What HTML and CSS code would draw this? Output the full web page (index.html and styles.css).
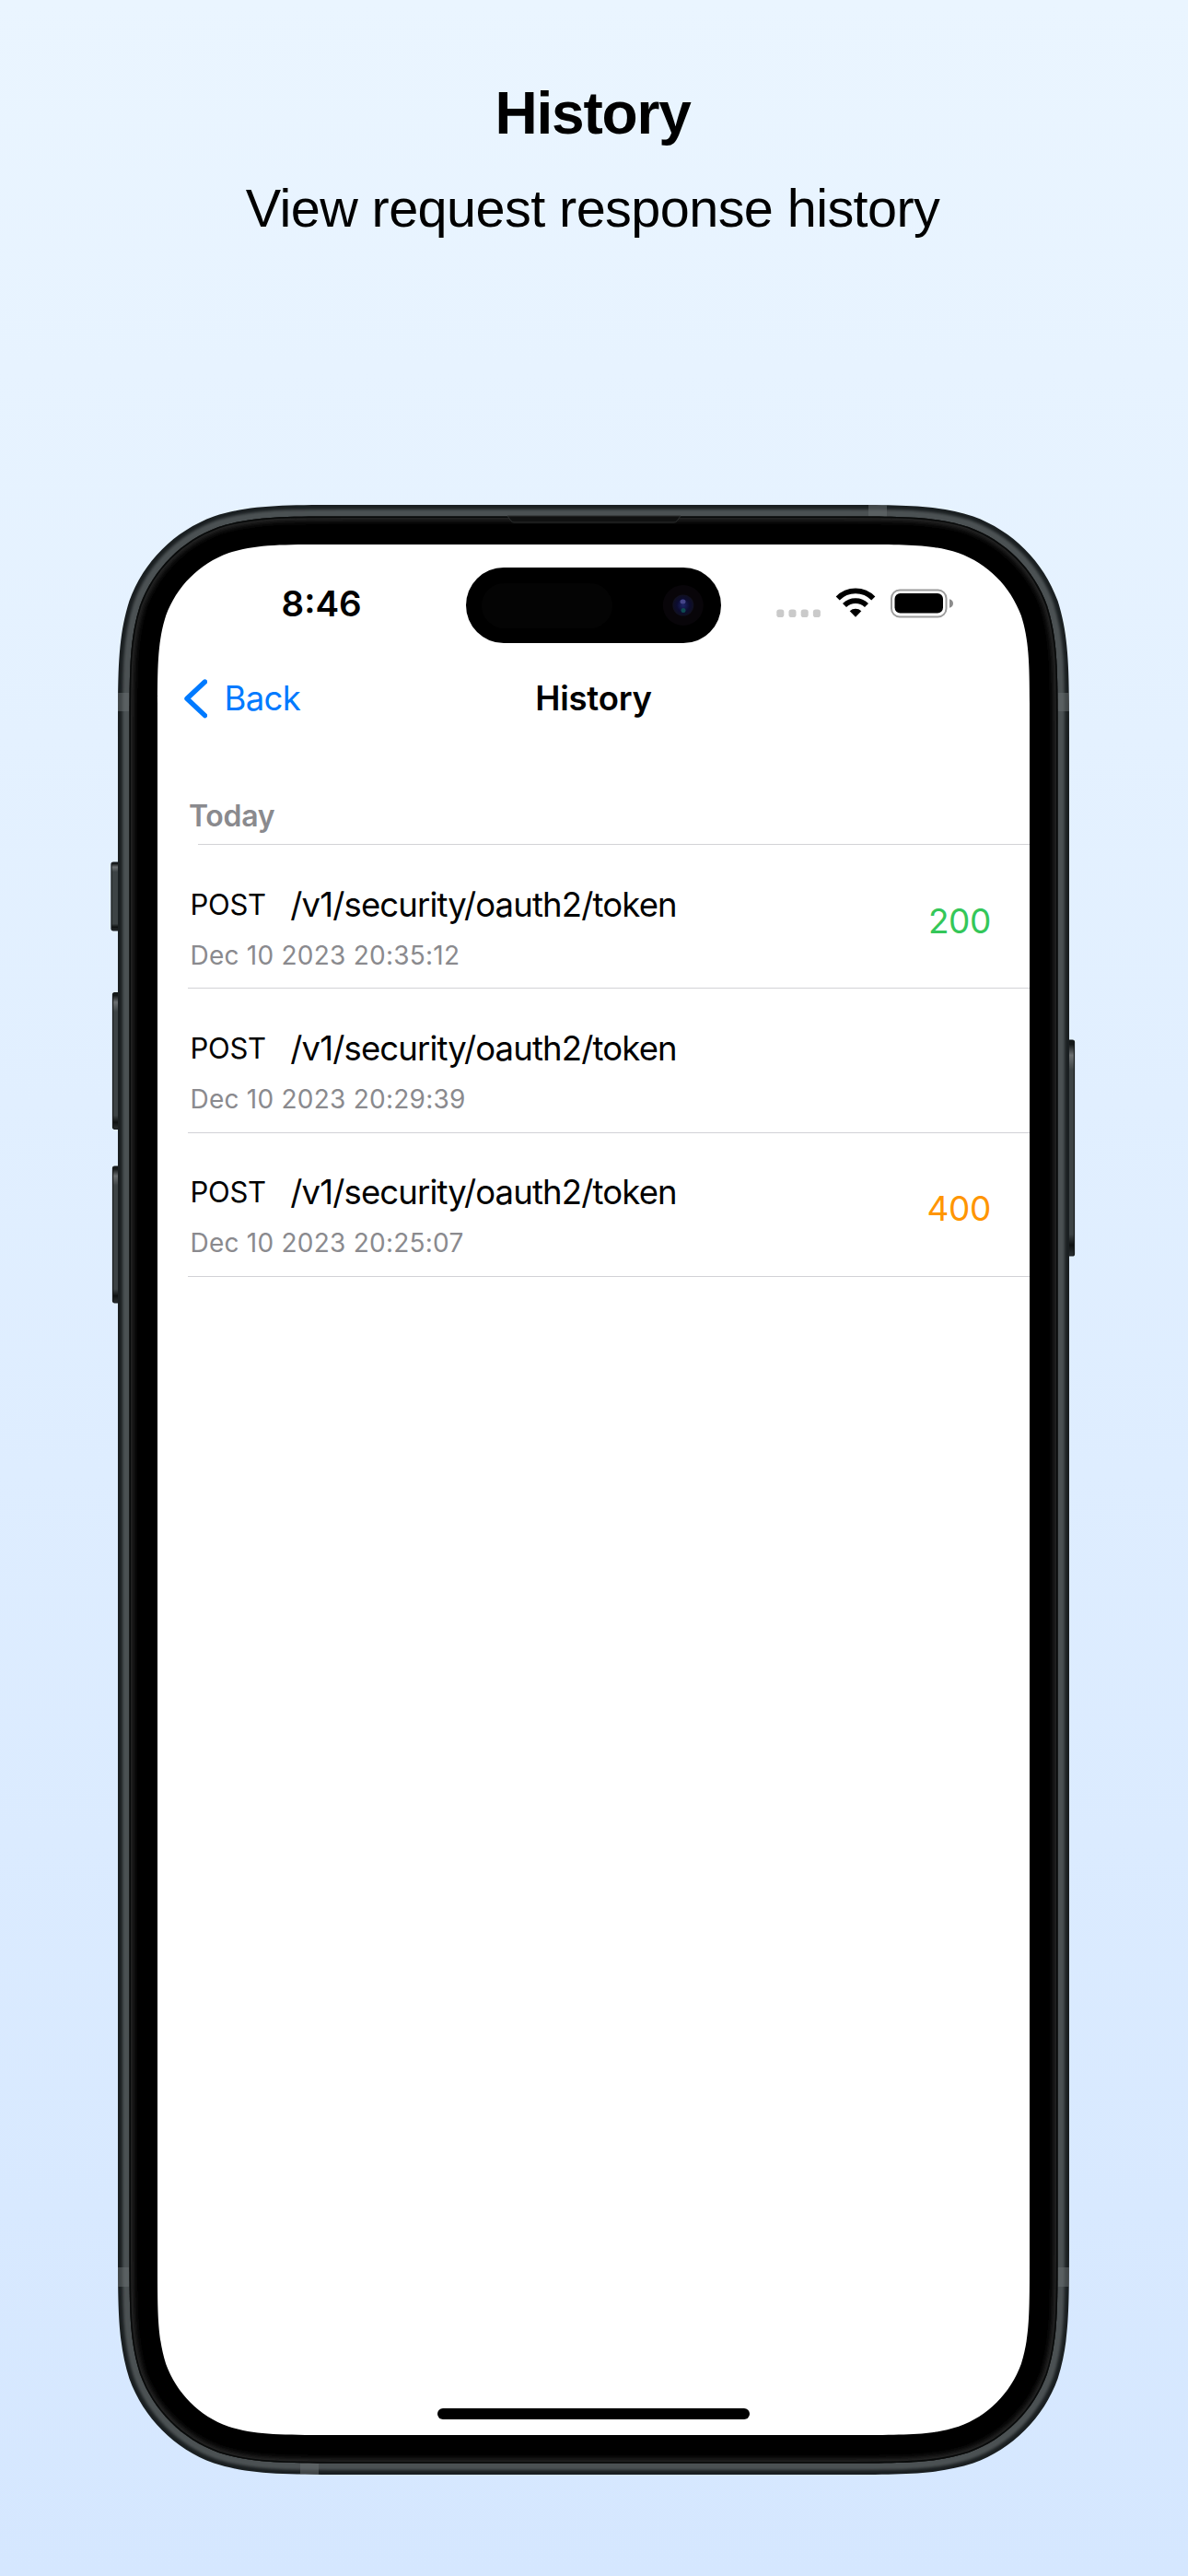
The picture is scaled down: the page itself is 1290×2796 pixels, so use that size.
FILE: index.html
```html
<!DOCTYPE html>
<html lang="en">
<head>
<meta charset="utf-8">
<title>History</title>
<link rel="stylesheet" href="styles.css">
</head>
<body>
<main class="page">
  <header class="intro">
    <h1 class="intro-title">History</h1>
    <p class="intro-text">View request response history</p>
  </header>
  <section class="phone">
    <svg class="phone-body" width="1053" height="2138" viewBox="-10 0 1053 2138" aria-hidden="true">
      <defs>
        <filter id="soft" x="-5%" y="-5%" width="110%" height="110%"><feGaussianBlur stdDeviation="1.6"/></filter>
        <filter id="glow" x="-5%" y="-5%" width="110%" height="110%"><feGaussianBlur stdDeviation="3"/></filter>
        <linearGradient id="button" x1="0" y1="0" x2="0" y2="1">
          <stop offset="0" stop-color="#15191a"/><stop offset=".02" stop-color="#15191a"/>
          <stop offset=".07" stop-color="#6c7072"/><stop offset=".14" stop-color="#3d4345"/>
          <stop offset=".9" stop-color="#3d4345"/><stop offset=".95" stop-color="#0e1112"/><stop offset="1" stop-color="#2b3032"/>
        </linearGradient>
        <radialGradient id="lens">
          <stop offset="0" stop-color="#1d2468"/><stop offset=".6" stop-color="#0c0c30"/><stop offset="1" stop-color="#10101f"/>
        </radialGradient>
        <path id="shell" d="M252.2 0H780.8c72.6 0 108.9 0 148 12.4c42.7 15.5 76.3 49.1 91.8 91.8c12.4 39.1 12.4 75.4 12.4 148V1885.8c0 72.6 0 108.9-12.4 148c-15.5 42.7-49.1 76.3-91.8 91.8c-39.1 12.4-75.4 12.4-148 12.4H252.2c-72.6 0-108.9 0-148-12.4c-42.7-15.5-76.3-49.1-91.8-91.8c-12.4-39.1-12.4-75.4-12.4-148V252.2c0-72.6 0-108.9 12.4-148c15.5-42.7 49.1-76.3 91.8-91.8c39.1-12.4 75.4-12.4 148-12.4z"/>
        <path id="bezel" d="M246.4 12.5H786.6c67.3 0 101 0 137.2 11.5c39.6 14.4 70.8 45.5 85.2 85.2c11.5 36.3 11.5 69.9 11.5 137.2V1891.6c0 67.3 0 101-11.5 137.2c-14.4 39.6-45.5 70.8-85.2 85.2c-36.3 11.5-69.9 11.5-137.2 11.5H246.4c-67.3 0-101 0-137.2-11.5c-39.6-14.4-70.8-45.5-85.2-85.2c-11.5-36.3-11.5-69.9-11.5-137.2V246.4c0-67.3 0-101 11.5-137.2c14.4-39.6 45.5-70.8 85.2-85.2c36.3-11.5 69.9-11.5 137.2-11.5z"/>
        <clipPath id="shell-clip"><use href="#shell"/></clipPath>
        <clipPath id="bezel-clip"><use href="#bezel"/></clipPath>
      </defs>
      <g fill="url(#button)" stroke="#15191a" stroke-width="1.2">
        <rect x="-7" y="388" width="10" height="74" rx="2"/>
        <rect x="-5.5" y="529.5" width="10" height="148" rx="2"/>
        <rect x="-5.5" y="718" width="10" height="148" rx="2"/>
        <rect x="1029" y="581" width="9.5" height="234" rx="2"/>
      </g>
      <use href="#shell" fill="#1a1f21"/>
      <g clip-path="url(#shell-clip)">
        <use href="#bezel" fill="none" stroke="#4c5153" stroke-width="15" filter="url(#soft)"/>
        <g fill="#6a6f71" fill-opacity=".5">
          <rect x="0" y="204" width="13" height="20"/><rect x="1020" y="204" width="13" height="20"/>
          <rect x="0" y="1913" width="13" height="21"/><rect x="1020" y="1913" width="13" height="21"/>
          <rect x="815" y="0" width="20" height="13"/><rect x="198" y="2125" width="20" height="13"/>
        </g>
      </g>
      <use href="#bezel"/>
      <g clip-path="url(#bezel-clip)">
        <use href="#bezel" fill="none" stroke="#2e2e2e" stroke-width="8" filter="url(#glow)"/>
        <use href="#bezel" fill="none" stroke="#080a0a" stroke-width="3"/>
      </g>
      <path d="M423 12h188l-4 5.5q-1 1.5-3 1.5h-174q-2 0-3-1.5z" fill="#101111" stroke="#2c2f2f"/>
      <path fill="#fff" d="M229.500 43H803.500c53.700 0 80.500 0 109.400 9.200c31.600 11.500 56.400 36.300 67.900 67.900c9.200 28.900 9.200 55.700 9.200 109.400V1908.500c0 53.700 0 80.500-9.200 109.400c-11.500 31.600-36.300 56.400-67.900 67.900c-28.900 9.200-55.700 9.200-109.400 9.200H229.500c-53.700 0-80.500 0-109.400-9.200c-31.600-11.500-56.400-36.300-67.900-67.900c-9.200-28.900-9.200-55.700-9.200-109.400V229.500c0-53.700 0-80.500 9.200-109.400c11.500-31.600 36.300-56.400 67.900-67.900c28.900-9.200 55.700-9.200 109.400-9.200z"/>
    </svg>
    <div class="screen">
      <div class="status">
        <span class="clock">8:46</span>
        <svg class="island" width="277" height="82" viewBox="0 0 277 82" aria-hidden="true">
          <rect width="277" height="82" rx="41"/>
          <rect x="17" y="17" width="142" height="49" rx="24.5" fill="#040404"/>
          <circle cx="235.8" cy="41" r="22" fill="#080509"/>
          <circle cx="235.8" cy="41" r="11.5" fill="url(#lens)"/>
          <ellipse cx="235.5" cy="37" rx="3" ry="2.5" fill="#45458a"/>
          <circle cx="236" cy="46.5" r="2.5" fill="#0d4a50"/>
        </svg>
        <svg class="indicators" width="194" height="34" viewBox="0 0 194 34" aria-hidden="true">
          <g fill="#cacaca">
            <rect x="0.3" y="23.5" width="8" height="8.5" rx="2.8"/><rect x="13.5" y="23.5" width="8" height="8.5" rx="2.8"/>
            <rect x="26.7" y="23.5" width="8" height="8.5" rx="2.8"/><rect x="39.9" y="23.5" width="8" height="8.5" rx="2.8"/>
          </g>
          <g fill="none" stroke="#000" stroke-width="5.7">
            <path d="M66.700 11.500a27 27 0 0 1 38.600 0"/>
            <path d="M74 19a17 17 0 0 1 24 0"/>
          </g>
          <path d="M86 31.700l-6.300-6.400a9.300 9.300 0 0 1 12.600 0z"/>
          <rect x="125" y="2.5" width="59.5" height="29" rx="9" fill="none" stroke="#9c9c9c" stroke-width="2"/>
          <rect x="128.5" y="6" width="52.5" height="21.5" rx="6"/>
          <path d="M188 12.200q4 1.300 4 4.800t-4 4.800z" fill="#8c8c8c"/>
        </svg>
      </div>
      <nav class="nav">
        <a class="back"><svg width="26" height="44" viewBox="0 0 26 44" aria-hidden="true"><path d="M23.500 4L4 22.300l19.500 18.300" fill="none" stroke="#007aff" stroke-width="5.4" stroke-linecap="round" stroke-linejoin="round"/></svg>Back</a>
        <span class="nav-title">History</span>
      </nav>
      <h2 class="section">Today</h2>
      <ul class="list">
        <li class="row">
          <div class="request"><p class="line"><span class="method">POST</span><span class="path">/v1/security/oauth2/token</span></p><time class="date">Dec 10 2023 20:35:12</time></div>
          <span class="code ok">200</span>
        </li>
        <li class="row">
          <div class="request"><p class="line"><span class="method">POST</span><span class="path">/v1/security/oauth2/token</span></p><time class="date">Dec 10 2023 20:29:39</time></div>
        </li>
        <li class="row">
          <div class="request"><p class="line"><span class="method">POST</span><span class="path">/v1/security/oauth2/token</span></p><time class="date">Dec 10 2023 20:25:07</time></div>
          <span class="code warn">400</span>
        </li>
      </ul>
      <div class="home"></div>
    </div>
  </section>
</main>
</body>
</html>
```
FILE: styles.css
```css
* { box-sizing: border-box; margin: 0; padding: 0; }
body { width: 1290px; font-family: Inter, "Liberation Sans", sans-serif; color: #000; }
.page {
  height: 2796px;
  overflow: hidden;
  background: linear-gradient(#eaf5ff, #d5e7ff);
}
.intro { height: 548px; padding: 86px 3px 0 0; text-align: center; font-family: "Liberation Sans", Arial, sans-serif; }
.intro-title { font-size: 64px; line-height: 74px; font-weight: 700; letter-spacing: -1.2px; }
.intro-text { margin-top: 33px; font-size: 57.6px; line-height: 66px; letter-spacing: -0.58px; }
.phone { position: relative; width: 1033px; height: 2138px; margin: 0 auto 0 128px; padding: 43px; }
.phone-body { position: absolute; top: 0; left: -10px; }
.screen { position: relative; display: flex; flex-direction: column; height: 2052px; }
.status { display: flex; align-items: flex-start; padding-top: 24.5px; }
.clock { width: 335px; padding-left: 134.5px; padding-top: 15.5px; font-size: 38.5px; line-height: 48px; font-weight: 600; }
.indicators { margin: 22.5px 0 0 60px; }
.nav { display: grid; grid-template-columns: 1fr auto 1fr; align-items: center; height: 44px; margin-top: 38px; padding-left: 28px; }
.back { display: flex; align-items: center; gap: 18.5px; color: #007aff; font-size: 36.5px; letter-spacing: -0.7px; }
.nav-title { margin-left: -28px; font-size: 36.5px; font-weight: 600; letter-spacing: -0.2px; }
.section {
  height: 137px;
  margin: 0.5px 0 0 44px;
  padding-top: 86px;
  border-bottom: 1px solid #d2d2d6;
  color: #8a8a8e;
  font-size: 32px;
  line-height: 39px;
  font-weight: 600;
  letter-spacing: -0.3px;
  text-indent: -10px;
}
.list { list-style: none; margin-left: 33px; }
.row { display: flex; align-items: flex-start; justify-content: space-between; height: 156.3px; padding: 42.5px 42px 0 2.5px; border-bottom: 1px solid #d2d2d6; }
.line { display: flex; align-items: center; gap: 26.5px; line-height: 44px; }
.method { font-size: 31px; letter-spacing: -0.3px; }
.path { font-size: 36.5px; letter-spacing: -0.85px; }
.date { display: block; margin-top: 16px; color: #8a8a8e; font-size: 28px; line-height: 34px; letter-spacing: 0.24px; }
.code { margin-top: 17px; font-size: 37px; line-height: 45px; letter-spacing: -0.4px; }
.ok { color: #34c759; }
.warn { color: #ff9500; }
.home { width: 339px; height: 11.5px; margin: auto auto 17.5px; border-radius: 6px; background: #000; }
```
